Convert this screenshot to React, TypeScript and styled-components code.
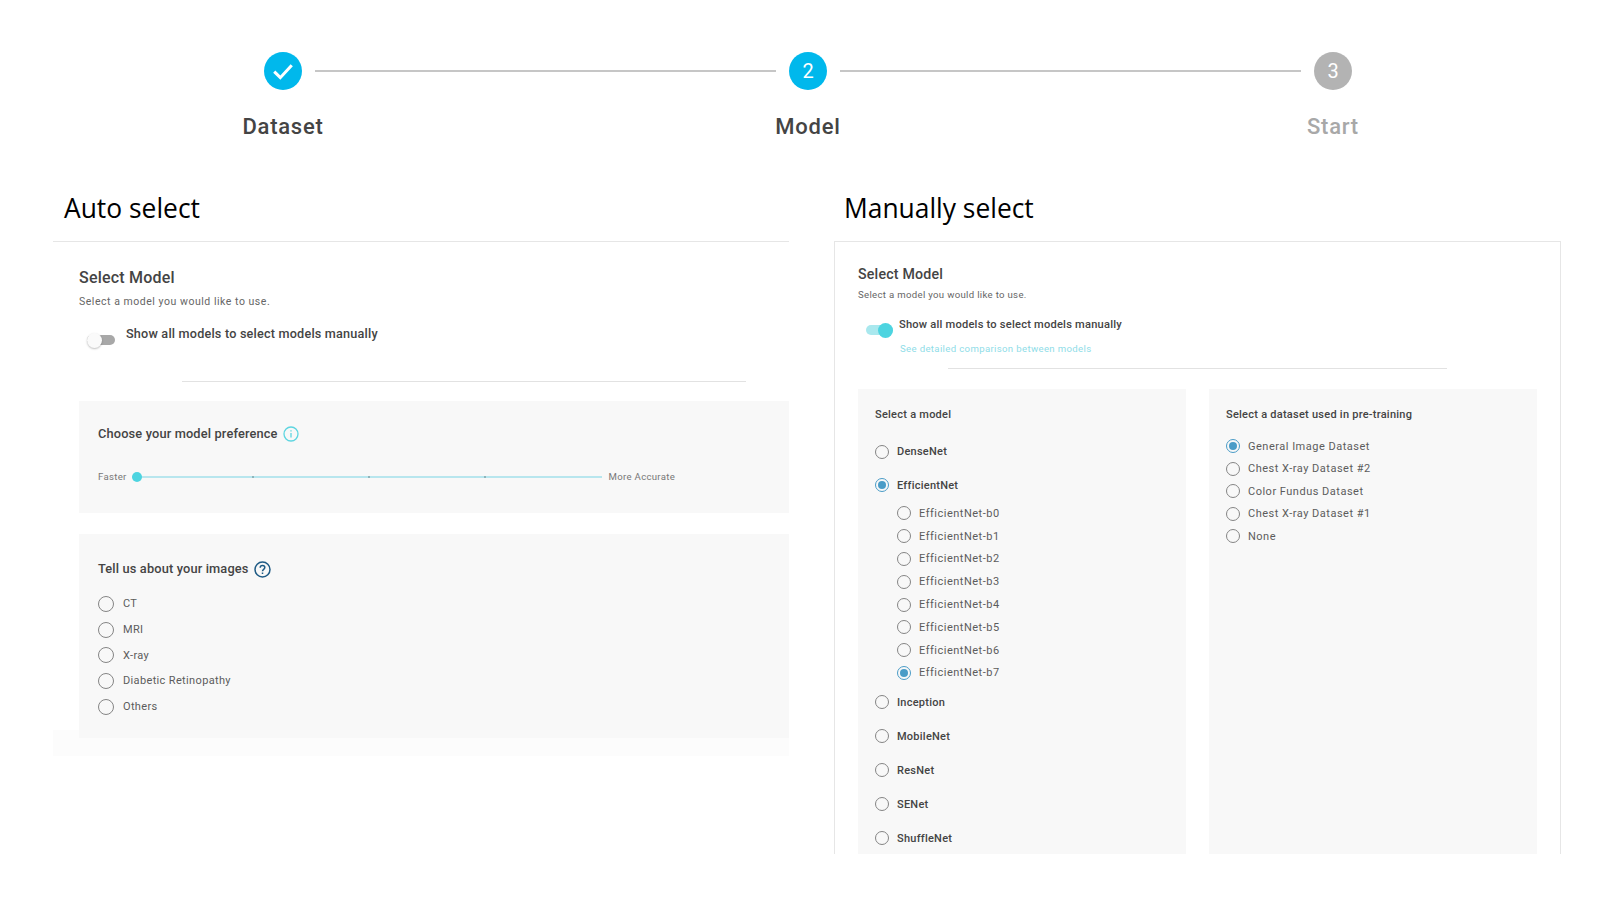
import styled, { createGlobalStyle } from "styled-components";

const ACCENT = "#4dd4e0";
const RADIO_ON = "#4a9cc7";

const DATASETS = [
  "General Image Dataset",
  "Chest X-ray Dataset #2",
  "Color Fundus Dataset",
  "Chest X-ray Dataset #1",
  "None",
];
const IMAGE_TYPES = ["CT", "MRI", "X-ray", "Diabetic Retinopathy", "Others"];
const EFFICIENT_NETS = ["b0", "b1", "b2", "b3", "b4", "b5", "b6", "b7"];

const GlobalStyle = createGlobalStyle`
  html, body {
    margin: 0;
    background: #fff;
    font-family: Roboto, "Liberation Sans", sans-serif;
  }
`;

const Page = styled.div`
  height: 900px;
  padding-bottom: 46px;
  box-sizing: border-box;
  display: flex;
  flex-direction: column;
  overflow: hidden;
`;

const Stepper = styled.div`
  display: flex;
  padding: 52px 212px 0 228px;
  height: 187px;
  box-sizing: border-box;
`;

const Step = styled.div`
  width: 110px;
  display: flex;
  flex-direction: column;
  align-items: center;
`;

const StepCircle = styled.div<{ $idle?: boolean }>`
  width: 38px;
  height: 38px;
  border-radius: 50%;
  background: ${({ $idle }) => ($idle ? "#b3b3b3" : "#00b8ec")};
  color: #fff;
  font-size: 20px;
  display: flex;
  align-items: center;
  justify-content: center;
`;

const StepLabel = styled.div<{ $idle?: boolean }>`
  margin-top: 24px;
  font-size: 22px;
  line-height: 26px;
  font-weight: 500;
  letter-spacing: 0.75px;
  color: ${({ $idle }) => ($idle ? "#a8a8a8" : "#444")};
`;

const Connector = styled.div`
  flex: 1;
  height: 2px;
  margin: 18px -23px 0;
  background: #c6c6c6;
`;

const Columns = styled.div`
  flex: 1;
  min-height: 0;
  display: grid;
  grid-template-columns: 736px 727px;
  column-gap: 45px;
  padding-left: 53px;
`;

const Column = styled.section`
  display: flex;
  flex-direction: column;
  min-height: 0;
`;

const Heading = styled.h2<{ $indent: number }>`
  margin: 0;
  padding-left: ${({ $indent }) => $indent}px;
  height: 54px;
  font-family: "Open Sans", sans-serif;
  font-size: 26.4px;
  line-height: 42px;
  font-weight: 400;
  color: #000;
`;

const AutoPanel = styled.div`
  border-top: 1px solid #e6e6e6;
  padding: 26px 0 18px 26px;
  background: linear-gradient(#fff 0, #fff 95%, #fcfcfc 95%);
`;

const ManualPanel = styled.div`
  flex: 1;
  min-height: 0;
  border: 1px solid #e6e6e6;
  border-bottom: none;
  padding: 22px 23px 0;
  display: flex;
  flex-direction: column;
  overflow: hidden;
`;

const Title = styled.div<{ $size: number }>`
  font-size: ${({ $size }) => $size}px;
  line-height: 20px;
  font-weight: 500;
  letter-spacing: 0.2px;
  color: #444;
`;

const Subtitle = styled.div<{ $gap: number; $size: number; $spacing: number }>`
  margin-top: ${({ $gap }) => $gap}px;
  font-size: ${({ $size }) => $size}px;
  line-height: 14px;
  letter-spacing: ${({ $spacing }) => $spacing}px;
  color: #666;
`;

const ToggleRow = styled.div<{ $gap: number; $indent: number; $spacing: number }>`
  margin-top: ${({ $gap }) => $gap}px;
  margin-left: ${({ $indent }) => $indent}px;
  display: flex;
  gap: ${({ $spacing }) => $spacing}px;
  align-items: flex-start;
`;

const ToggleTrack = styled.div<{ $on?: boolean }>`
  position: relative;
  margin-top: ${({ $on }) => ($on ? 8 : 9)}px;
  width: ${({ $on }) => ($on ? 27 : 28)}px;
  height: 10px;
  border-radius: 5px;
  background: ${({ $on }) => ($on ? "#a9e8ee" : "#a8a8a8")};
`;

const ToggleKnob = styled.span<{ $on?: boolean }>`
  position: absolute;
  top: -2.5px;
  ${({ $on }) => ($on ? "right: 0;" : "left: 0;")}
  width: 15px;
  height: 15px;
  border-radius: 50%;
  background: ${({ $on }) => ($on ? ACCENT : "#fafafa")};
  box-shadow: ${({ $on }) => ($on ? "none" : "0 1px 2px rgba(0, 0, 0, 0.25)")};
`;

const ToggleText = styled.div<{ $size: number }>`
  font-size: ${({ $size }) => $size}px;
  line-height: 16px;
  font-weight: 500;
  letter-spacing: 0.2px;
  color: #444;
`;

const DetailLink = styled.a`
  display: block;
  margin: 7px 0 0 42px;
  font-size: 9.6px;
  line-height: 14px;
  letter-spacing: 0.35px;
  color: #8fdde8;
`;

const Divider = styled.hr<{ $gap: number; $left: number; $width: number }>`
  margin: ${({ $gap }) => $gap}px 0 0 ${({ $left }) => $left}px;
  width: ${({ $width }) => $width}px;
  height: 1px;
  border: none;
  background: #e2e2e2;
`;

const GrayBox = styled.div<{ $gap: number; $height: number }>`
  margin-top: ${({ $gap }) => $gap}px;
  height: ${({ $height }) => $height}px;
  background: #f8f8f8;
  padding-left: 19px;
  box-sizing: border-box;
`;

const BoxTitle = styled.div<{ $top: number }>`
  padding-top: ${({ $top }) => $top}px;
  display: flex;
  align-items: center;
  gap: 5px;
  font-size: 12.8px;
  line-height: 18px;
  font-weight: 500;
  letter-spacing: 0.15px;
  color: #444;
`;

const SliderRow = styled.div`
  margin-top: 27px;
  display: flex;
  align-items: center;
  font-size: 9.6px;
  line-height: 14px;
  letter-spacing: 0.3px;
  color: #777;
`;

const SliderTrack = styled.div`
  position: relative;
  margin: 0 7px 0 5px;
  width: 470px;
  height: 2px;
  background: #b8e6ee;
`;

const SliderThumb = styled.span`
  position: absolute;
  left: 0;
  top: -4px;
  width: 10px;
  height: 10px;
  border-radius: 50%;
  background: ${ACCENT};
`;

const SliderTick = styled.span<{ $at: number }>`
  position: absolute;
  left: ${({ $at }) => $at}px;
  top: 0;
  width: 2px;
  height: 2px;
  background: #8fb5bb;
`;

const ModelGrid = styled.div`
  flex: 1;
  min-height: 0;
  margin-top: 20px;
  display: grid;
  grid-template-columns: 328px 328px;
  column-gap: 23px;
`;

const ModelBox = styled.div`
  background: #f8f8f8;
  padding: 19px 0 0 17px;
  overflow: hidden;
`;

const SmallTitle = styled.div`
  font-size: 11px;
  line-height: 14px;
  font-weight: 500;
  letter-spacing: 0.25px;
  color: #444;
`;

const RadioList = styled.div<{ $top?: number; $indent?: number }>`
  margin-top: ${({ $top = 0 }) => $top}px;
  margin-left: ${({ $indent = 0 }) => $indent}px;
  display: flex;
  flex-direction: column;
`;

const RadioRow = styled.label<{ $height: number; $gap: number }>`
  height: ${({ $height }) => $height}px;
  display: flex;
  align-items: center;
  gap: ${({ $gap }) => $gap}px;
`;

const RadioCircle = styled.span<{ $on?: boolean; $size: number }>`
  width: ${({ $size }) => $size}px;
  height: ${({ $size }) => $size}px;
  box-sizing: border-box;
  flex-shrink: 0;
  border-radius: 50%;
  border: 1.5px solid ${({ $on }) => ($on ? RADIO_ON : "#858585")};
  display: flex;
  align-items: center;
  justify-content: center;

  &::after {
    content: "";
    display: ${({ $on }) => ($on ? "block" : "none")};
    width: 8px;
    height: 8px;
    border-radius: 50%;
    background: ${RADIO_ON};
  }
`;

const RadioText = styled.span<{ $strong?: boolean; $spacing?: number }>`
  font-size: 11px;
  letter-spacing: ${({ $strong, $spacing = 0.5 }) => ($strong ? 0.25 : $spacing)}px;
  font-weight: ${({ $strong }) => ($strong ? 500 : 400)};
  color: ${({ $strong }) => ($strong ? "#444" : "#5c5c5c")};
`;

const CheckIcon = () => (
  <svg width="28" height="28" viewBox="0 0 24 24" fill="none">
    <path d="M4.5 12.5l5.2 5.2L19.5 7" stroke="#fff" strokeWidth="2.6" />
  </svg>
);

const InfoIcon = () => (
  <svg width="16" height="16" viewBox="0 0 16 16" fill="none" stroke="#5dd5e0" strokeWidth="1.3">
    <circle cx="8" cy="8" r="7" />
    <path d="M8 7v4.5M8 4.2v1.4" />
  </svg>
);

const HelpIcon = () => (
  <svg width="17" height="17" viewBox="0 0 17 17" fill="none" stroke="#1f5b85" strokeWidth="1.5">
    <circle cx="8.5" cy="8.5" r="7.5" />
    <path d="M6.2 6.8c0-1.4 1-2.2 2.3-2.2s2.3.9 2.3 2c0 1.8-2.3 1.8-2.3 3.6M8.5 11.4v1.5" />
  </svg>
);

type RadioProps = { label: string; on?: boolean; strong?: boolean; height?: number };

const Radio = ({ label, on, strong, height = strong ? 34 : 22.8 }: RadioProps) => (
  <RadioRow $height={height} $gap={8}>
    <RadioCircle $on={on} $size={14} />
    <RadioText $strong={strong}>{label}</RadioText>
  </RadioRow>
);

export default function App() {
  return (
    <Page>
      <GlobalStyle />
      <Stepper>
        <Step>
          <StepCircle>
            <CheckIcon />
          </StepCircle>
          <StepLabel>Dataset</StepLabel>
        </Step>
        <Connector />
        <Step>
          <StepCircle>2</StepCircle>
          <StepLabel>Model</StepLabel>
        </Step>
        <Connector />
        <Step>
          <StepCircle $idle>3</StepCircle>
          <StepLabel $idle>Start</StepLabel>
        </Step>
      </Stepper>

      <Columns>
        <Column>
          <Heading $indent={11}>Auto select</Heading>
          <AutoPanel>
            <Title $size={16}>Select Model</Title>
            <Subtitle $gap={7} $size={10.5} $spacing={0.53}>
              Select a model you would like to use.
            </Subtitle>
            <ToggleRow $gap={17} $indent={8} $spacing={11}>
              <ToggleTrack>
                <ToggleKnob />
              </ToggleTrack>
              <ToggleText $size={12.65}>Show all models to select models manually</ToggleText>
            </ToggleRow>
            <Divider $gap={36} $left={103} $width={564} />
            <GrayBox $gap={19} $height={112}>
              <BoxTitle $top={24}>
                Choose your model preference <InfoIcon />
              </BoxTitle>
              <SliderRow>
                Faster
                <SliderTrack>
                  <SliderThumb />
                  <SliderTick $at={120} />
                  <SliderTick $at={236} />
                  <SliderTick $at={352} />
                </SliderTrack>
                More Accurate
              </SliderRow>
            </GrayBox>
            <GrayBox $gap={21} $height={204}>
              <BoxTitle $top={26}>
                Tell us about your images <HelpIcon />
              </BoxTitle>
              <RadioList $top={13}>
                {IMAGE_TYPES.map((type) => (
                  <RadioRow key={type} $height={25.7} $gap={9}>
                    <RadioCircle $size={16} />
                    <RadioText $spacing={0.35}>{type}</RadioText>
                  </RadioRow>
                ))}
              </RadioList>
            </GrayBox>
          </AutoPanel>
        </Column>

        <Column>
          <Heading $indent={10}>Manually select</Heading>
          <ManualPanel>
            <Title $size={14.2}>Select Model</Title>
            <Subtitle $gap={4} $size={9.6} $spacing={0.32}>
              Select a model you would like to use.
            </Subtitle>
            <ToggleRow $gap={15} $indent={8} $spacing={6}>
              <ToggleTrack $on>
                <ToggleKnob $on />
              </ToggleTrack>
              <ToggleText $size={11.15}>Show all models to select models manually</ToggleText>
            </ToggleRow>
            <DetailLink>See detailed comparison between models</DetailLink>
            <Divider $gap={12} $left={90} $width={499} />
            <ModelGrid>
              <ModelBox>
                <SmallTitle>Select a model</SmallTitle>
                <RadioList $top={13}>
                  <Radio strong label="DenseNet" height={33.5} />
                  <Radio strong on label="EfficientNet" height={33.5} />
                </RadioList>
                <RadioList $indent={22}>
                  {EFFICIENT_NETS.map((name) => (
                    <Radio key={name} label={`EfficientNet-${name}`} on={name === "b7"} />
                  ))}
                </RadioList>
                <RadioList $top={1}>
                  {["Inception", "MobileNet", "ResNet", "SENet", "ShuffleNet"].map((name) => (
                    <Radio key={name} strong label={name} />
                  ))}
                </RadioList>
              </ModelBox>
              <ModelBox>
                <SmallTitle>Select a dataset used in pre-training</SmallTitle>
                <RadioList $top={13}>
                  {DATASETS.map((name, i) => (
                    <Radio key={name} label={name} on={i === 0} height={22.5} />
                  ))}
                </RadioList>
              </ModelBox>
            </ModelGrid>
          </ManualPanel>
        </Column>
      </Columns>
    </Page>
  );
}
